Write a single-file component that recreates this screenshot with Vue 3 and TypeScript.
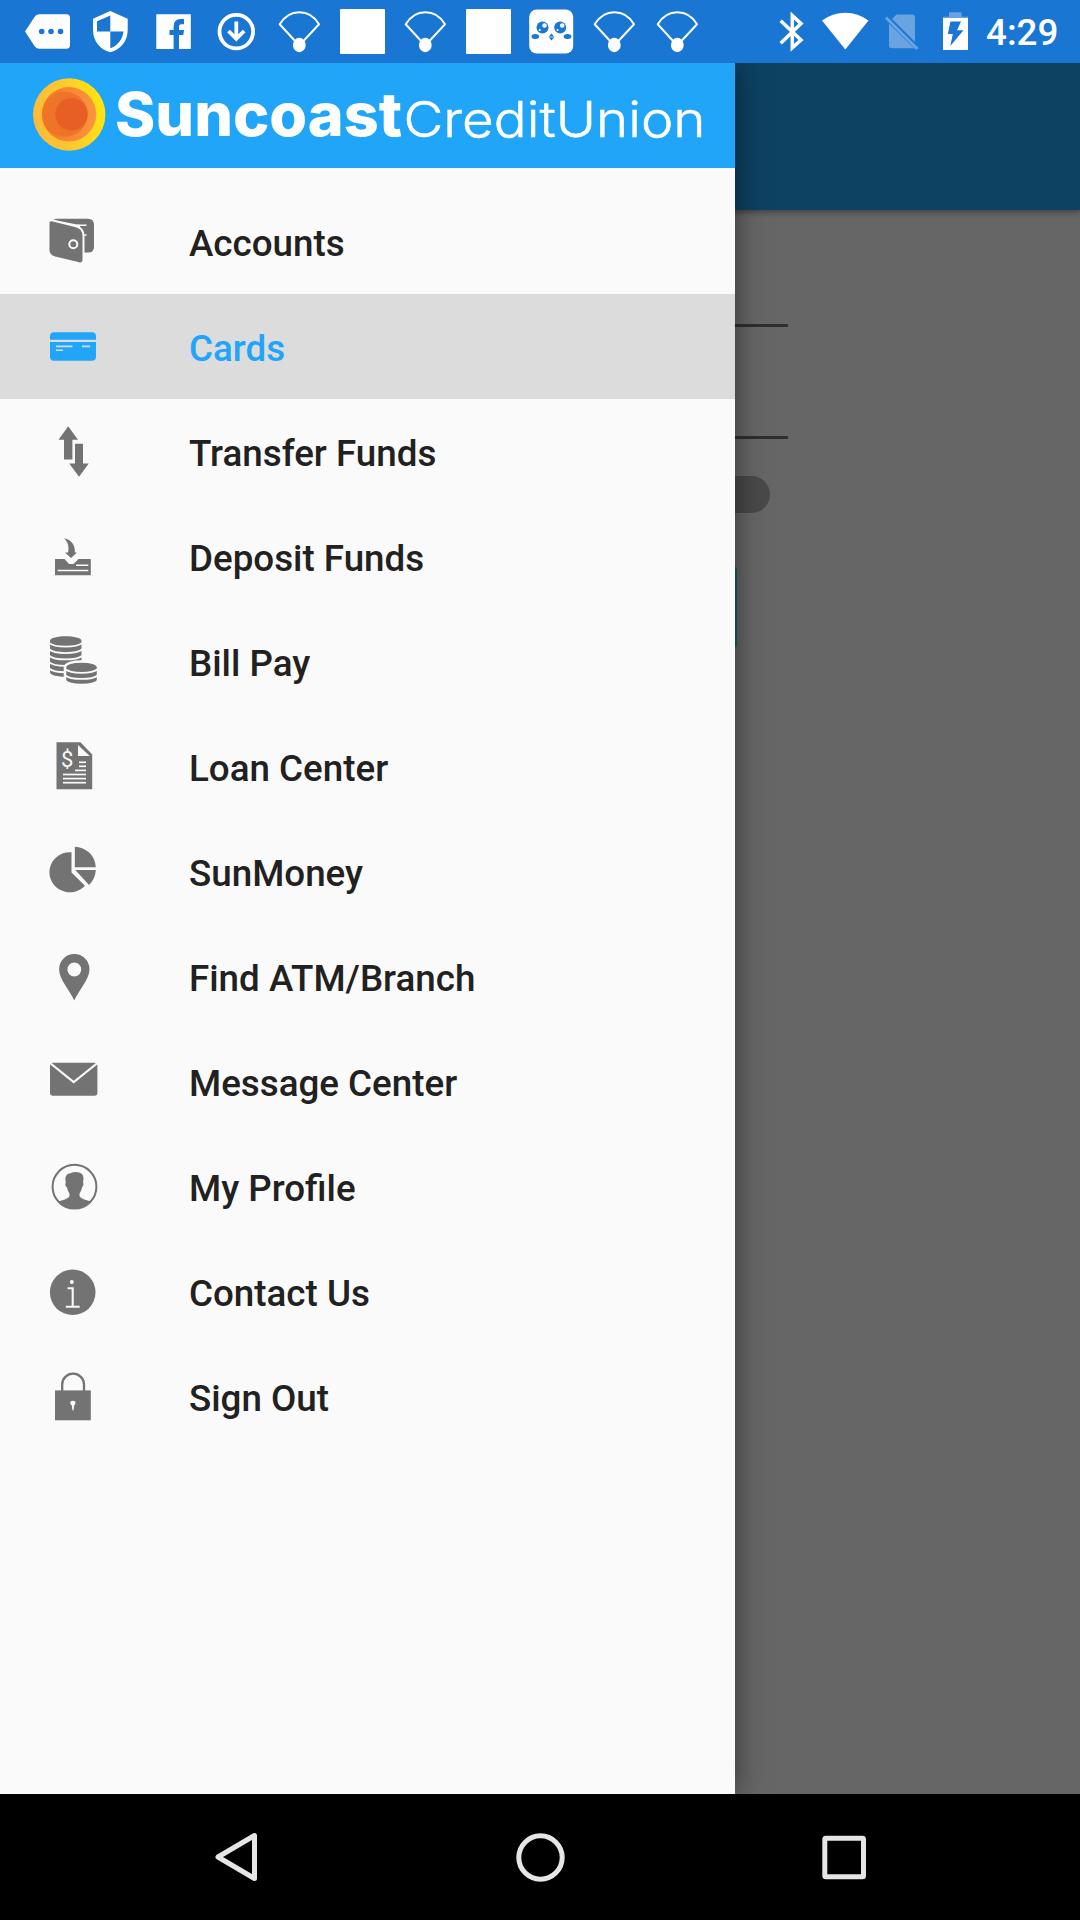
<script setup lang="ts">
import { ref } from 'vue'

interface MenuItem {
  id: string
  label: string
}

const items: MenuItem[] = [
  { id: 'accounts', label: 'Accounts' },
  { id: 'cards', label: 'Cards' },
  { id: 'transfer', label: 'Transfer Funds' },
  { id: 'deposit', label: 'Deposit Funds' },
  { id: 'bill', label: 'Bill Pay' },
  { id: 'loan', label: 'Loan Center' },
  { id: 'sunmoney', label: 'SunMoney' },
  { id: 'atm', label: 'Find ATM/Branch' },
  { id: 'message', label: 'Message Center' },
  { id: 'profile', label: 'My Profile' },
  { id: 'contact', label: 'Contact Us' },
  { id: 'signout', label: 'Sign Out' },
]

const active = ref('cards')

const notifications: string[] = [
  'tag', 'shield', 'facebook', 'download', 'chute', 'square',
  'chute', 'square', 'bird', 'chute', 'chute',
]

const leftCoinGaps = [33.9, 40.3, 46.7, 53.1, 59.5]
const loanLines: [number, number][] = [
  [79, 48.3], [79, 52.3], [75, 56.4], [63, 60.5], [63, 64.6], [63, 68.7],
]
</script>

<template>
  <div class="screen">
    <header class="status">
      <svg v-for="(n, i) in notifications" :key="i" class="note" viewBox="0 0 63 63">
        <template v-if="n === 'tag'">
          <path fill="#fff" d="M9 31.5 L18.5 17 Q20.200 14.300 23 14.300 H50.500 Q54 14.300 54 18 V45 Q54 48.700 50.500 48.700 H23 Q20.200 48.700 18.500 46 Z" />
          <circle v-for="x in [25.7, 35, 44.500]" :key="x" class="ink" :cx="x" cy="31.500" r="2.800" />
        </template>
        <template v-else-if="n === 'shield'">
          <path fill="#fff" d="M31.300 11 L48.700 18.700 V30 C48.700 41 41.500 49.500 31.300 52.200 C21 49.500 14 41 14 30 V18.700 Z" />
          <path class="ink" d="M31.300 15.500 V31.500 H18 V21.300 Z M31.300 31.500 H44.500 C43.500 39.500 38.500 45.800 31.300 48.300 Z" />
        </template>
        <template v-else-if="n === 'facebook'">
          <path fill="#fff" d="M14.300 14.300 H48.800 V49 H14.300 Z" />
          <path class="ink" d="M31.600 49 V35 H27.500 V30 H31.600 V26.500 Q31.600 19 38.500 19 H42 V24.300 H39.500 Q37 24.300 37 26.800 V30 H42 L41.300 35 H37 V49 Z" />
        </template>
        <template v-else-if="n === 'download'">
          <circle cx="31.300" cy="31.600" r="16.800" fill="none" stroke="#fff" stroke-width="3.800" />
          <path d="M31.300 21.500 V38.500 M23.500 31 L31.300 38.800 L39.100 31" fill="none" stroke="#fff" stroke-width="3.800" />
        </template>
        <template v-else-if="n === 'chute'">
          <path d="M28 42 L11.700 24.300 Q19 12.300 31.300 12.300 Q44 12.300 51 24.300 L34.500 42" fill="none" stroke="#fff" stroke-width="2" stroke-linejoin="round" />
          <ellipse cx="31.300" cy="45" rx="6.400" ry="7.200" fill="#fff" />
        </template>
        <rect v-else-if="n === 'square'" x="9" y="9" width="45" height="45" rx="1" fill="#fff" />
        <template v-else>
          <rect x="9.200" y="9.500" width="44" height="44" rx="7.500" fill="#fff" />
          <circle class="ink" cx="22.500" cy="27.500" r="6" />
          <circle class="ink" cx="40.200" cy="27.500" r="6" />
          <circle cx="24.500" cy="25.500" r="2.300" fill="#fff" />
          <circle cx="42.200" cy="25.500" r="2.300" fill="#fff" />
          <circle cx="19.800" cy="30" r="1.100" fill="#fff" />
          <circle cx="37.500" cy="30" r="1.100" fill="#fff" />
          <ellipse class="ink" cx="15.300" cy="36.500" rx="3.800" ry="2.500" />
          <ellipse class="ink" cx="47.500" cy="36.500" rx="3.800" ry="2.500" />
          <path class="ink" d="M31.500 33.500 L34.500 37 L31.500 40.500 L28.500 37 Z" />
          <path d="M28.500 37 H34.500" stroke="#fff" stroke-width=".7" />
        </template>
      </svg>
      <svg class="bt" width="38" height="63" viewBox="774 0 38 63">
        <path d="M780.700 20.800 L801 40 L792.300 47.800 V15.500 L801 23.600 L780.700 43.300" fill="none" stroke="#fff" stroke-width="3.500" />
      </svg>
      <svg width="66" height="63" viewBox="812 0 66 63">
        <path fill="#fff" d="M822 20.500 Q832.500 12.700 845.300 12.700 Q858 12.700 868.500 20.500 L845.300 49.500 Z" />
      </svg>
      <svg width="52" height="63" viewBox="878 0 52 63">
        <path fill="#69a4e0" d="M889 23.500 L914.800 48.800 Q913.500 48.200 912 48.200 H892 Q889 48.200 889 45 Z M896.500 14.500 H911.800 Q915 14.500 915 17.700 V43 L891.500 19.600 Z" />
        <path d="M886 17.500 L917.500 49" stroke="#69a4e0" stroke-width="3" />
        <path d="M888.500 16.600 L917 45" stroke="#1976d2" stroke-width="1.600" />
      </svg>
      <svg width="54" height="63" viewBox="930 0 54 63">
        <rect x="949" y="12.300" width="12.500" height="5.500" fill="#69a4e0" />
        <rect x="943" y="16.700" width="25" height="1.400" fill="#69a4e0" />
        <rect x="943" y="18" width="25" height="32" fill="#fff" />
        <path class="ink" d="M950.500 21.500 H961 L957 30.200 H963.500 L950.300 46 L952.800 34 H947.800 Z" />
      </svg>
      <span class="clock">4:29</span>
    </header>

    <main class="stage">
      <section class="page">
        <div class="appbar"></div>
        <div class="form">
          <div class="line first"></div>
          <div class="line second"></div>
          <div class="pill"></div>
          <div class="button"></div>
        </div>
      </section>

      <aside class="drawer">
        <div class="brand">
          <svg width="735" height="105" viewBox="0 63 735 105">
            <defs>
              <linearGradient id="rim" x1="0" x2="1" y1=".6" y2=".4">
                <stop offset="0" stop-color="#fdb93a" />
                <stop offset=".5" stop-color="#fccb2c" />
                <stop offset="1" stop-color="#ffe60c" />
              </linearGradient>
              <linearGradient id="glow" x1="0" x2="1">
                <stop offset="0" stop-color="#f07a28" />
                <stop offset="1" stop-color="#fb9440" />
              </linearGradient>
            </defs>
            <circle cx="69.200" cy="114.500" r="36.200" fill="url(#rim)" />
            <circle cx="69" cy="114.300" r="27.200" fill="url(#glow)" />
            <circle cx="65" cy="114.300" r="22.500" fill="#ef7428" />
            <circle cx="71.500" cy="114.300" r="16.200" fill="#e75f25" />
            <text x="115" y="136.300" class="bold" textLength="287" lengthAdjust="spacingAndGlyphs">Suncoast</text>
            <text x="403.500" y="136.500" class="light" textLength="302" lengthAdjust="spacingAndGlyphs">CreditUnion</text>
          </svg>
        </div>

        <nav class="menu">
          <a v-for="item in items" :key="item.id" class="row" :class="{ active: item.id === active }" @click="active = item.id">
            <svg class="icon" viewBox="36 0 72 105" fill="currentColor">
              <template v-if="item.id === 'accounts'">
                <path d="M53 31 Q55 29.700 58 29.700 H88 Q94 29.700 94 36 V58 Q94 63.500 88 63.500 H80 V36 Z" />
                <path d="M77 36.300 H86.500 M82 46 H86.500" class="gap" stroke-width="1.600" />
                <path class="cut" stroke-width="2" d="M48.500 34.500 Q48.500 30.500 53 31.500 L76 37.300 Q83.500 39.300 83.500 47 V70.500 Q83.500 75 79 74.300 L55 68.500 Q48.500 66.600 48.500 61 Z" />
                <circle cx="73.300" cy="55.300" r="4" class="gap" stroke-width="2" />
              </template>
              <template v-else-if="item.id === 'cards'">
                <rect x="50" y="38.300" width="46" height="28.500" rx="4" />
                <path class="gap" stroke-width="2.200" d="M50 46.800 H96" />
                <path class="gap" stroke-width="1.600" d="M56 52.400 H72.500 M82 52.400 H90 M56 56.200 H63" />
              </template>
              <template v-else-if="item.id === 'transfer'">
                <path d="M68.200 27.200 L78 40.700 H72.400 V60.400 H64 V40.700 H58.500 Z" />
                <path d="M75 44.800 H83 V64.400 H88.800 L79 77.700 L69.200 64.400 H75 Z" />
              </template>
              <template v-else-if="item.id === 'deposit'">
                <path d="M64 34.300 C71.500 35.500 75.500 41.500 74.800 48.600 H77 L71 54 L65 48.600 H68 C69.500 42.500 67.500 37.500 64 34.300 Z" />
                <path d="M55 55 H64.500 L69 60 H73.500 L78.500 55 H90.800 V71.200 H55 Z" />
                <path class="gap" stroke-width="1.600" d="M76 61.200 H88.300 M57.700 66.500 H88.300" />
              </template>
              <template v-else-if="item.id === 'bill'">
                <path d="M50 31.800 C50 25.800 81.500 25.800 81.500 31.800 V63.300 C81.500 69.300 50 69.300 50 63.300 Z" />
                <path v-for="y in leftCoinGaps" :key="y" class="gap" stroke-width="1.800" :d="`M49 ${y} C55 ${y + 5} 76 ${y + 5} 82.500 ${y}`" />
                <path class="cut" stroke-width="2.500" d="M65 58.200 C65 50.600 98 50.600 98 58.200 V70.700 C98 77.700 65 77.700 65 70.700 Z" />
                <path class="gap" stroke-width="1.800" d="M65 60 C71 65.200 92 65.200 98 60 M65 66.200 C71 71.200 92 71.200 98 66.200" />
              </template>
              <template v-else-if="item.id === 'loan'">
                <path d="M56.500 28.200 H80.500 L92.200 40.500 V75.300 H56.500 Z" />
                <path fill="#fafafa" d="M78 31 L89.800 42 H78 Z" />
                <text x="67.300" y="52.500" class="dollar">$</text>
                <path v-for="l in loanLines" :key="l[1]" class="gap" stroke-width="1.700" :d="`M${l[0]} ${l[1]} H86`" />
              </template>
              <template v-else-if="item.id === 'sunmoney'">
                <path d="M70.800 33.300 V53.500 L84.200 66.700 A20.400 20 0 1 1 70.800 33.300 Z" transform="translate(.7 0)" />
                <path d="M74.800 27.800 A21.200 21 0 0 1 95.800 48.300 H74.800 Z" />
                <path d="M75.300 51 H95.800 Q95.500 59.500 89 66 Z" />
              </template>
              <path v-else-if="item.id === 'atm'" fill-rule="evenodd" d="M74.300 76.500 C70.500 67.500 59.100 55.500 59.100 45.300 A15.200 15.200 0 0 1 89.500 45.300 C89.500 55.500 78 67.500 74.300 76.500 Z M74.300 38.600 A6.900 6.900 0 1 0 74.300 52.400 A6.900 6.900 0 1 0 74.300 38.600 Z" />
              <template v-else-if="item.id === 'message'">
                <rect x="50" y="33.700" width="47.400" height="33" rx="3" />
                <path class="gap" stroke-width="2.200" d="M50 34 L73.700 53.200 L97.500 34" />
              </template>
              <template v-else-if="item.id === 'profile'">
                <circle cx="74.500" cy="52.700" r="21.900" fill="none" stroke="currentColor" stroke-width="2" />
                <path d="M65.800 48.500 C64.500 42.500 66.500 39.700 70.500 39.200 C75 37.200 80.500 37.900 82.500 40.800 C84 43.500 83.500 46 83 48.500 C84 50 83 52.500 82 53.500 C81.500 56.500 80.500 58 79.500 59.500 V62 C81.500 65.500 86.500 65.800 91 67.500 A22.500 22.500 0 0 1 58 67.500 C62.500 65.800 68 65.500 69.500 62 V59.500 C68 57.500 67.500 55.500 67 53.500 C65.500 52.500 64.800 50 65.800 48.500 Z" />
              </template>
              <template v-else-if="item.id === 'contact'">
                <circle cx="72.700" cy="53.300" r="22.800" />
                <circle cx="71.800" cy="42.900" r="2" fill="#fafafa" />
                <path class="gap" stroke-width="2.100" d="M67.500 49.300 H72.700 V67.800 M65.800 67.800 H79.700" />
              </template>
              <template v-else>
                <rect x="55" y="46.400" width="35.800" height="29.900" />
                <path d="M62.200 47 V40.500 A10.900 10.800 0 0 1 84 40.500 V47" fill="none" stroke="currentColor" stroke-width="2.300" />
                <path fill="#fafafa" d="M70.500 57.500 Q72.900 55.800 75.300 57.500 V60 L74.200 61.500 L73.500 66.500 H72.500 L71.800 61.500 L70.500 60 Z" />
              </template>
            </svg>
            <span class="label">{{ item.label }}</span>
          </a>
        </nav>
      </aside>
    </main>

    <footer class="navbar">
      <svg width="60" height="60" viewBox="0 0 60 60"><path d="M49.500 8.500 V51.500 L13 30 Z" /></svg>
      <svg width="60" height="60" viewBox="0 0 60 60"><circle cx="30.500" cy="30.500" r="21.700" /></svg>
      <svg width="60" height="60" viewBox="0 0 60 60"><rect x="10.800" y="11.300" width="38.700" height="38.400" rx="1" /></svg>
    </footer>
  </div>
</template>

<style>
body {
  margin: 0;
  background: #000;
}
</style>

<style scoped>
.screen {
  width: 1080px;
  height: 1920px;
  display: flex;
  flex-direction: column;
  overflow: hidden;
  font-family: Roboto, "Liberation Sans", sans-serif;
}
svg {
  display: block;
  flex: none;
}
.status {
  height: 63px;
  flex: none;
  display: flex;
  align-items: center;
  padding-left: 16px;
  background: #1976d2;
}
.note {
  width: 63px;
  height: 63px;
}
.ink {
  fill: #1976d2;
}
.bt {
  margin-left: 65px;
}
.clock {
  padding: 3px 0 0 2px;
  color: #fff;
  font-size: 36.75px;
  font-weight: 500;
  line-height: 60px;
}
.stage {
  position: relative;
  flex: 1;
  overflow: hidden;
}
.page {
  height: 100%;
  background: #666;
}
.appbar {
  height: 147px;
  background: #0d4262;
  box-shadow: 0 2px 6px rgba(0, 0, 0, 0.4);
}
.form {
  padding-top: 114px;
}
.line {
  width: 788px;
  height: 3px;
  background: #2f2f2f;
}
.second {
  margin-top: 109px;
}
.pill {
  width: 770px;
  height: 37px;
  margin-top: 37px;
  border-radius: 19px;
  background: #494949;
}
.button {
  width: 737px;
  height: 80px;
  margin-top: 54px;
  border-radius: 2px;
  background: #1d5a6c;
}
.drawer {
  position: absolute;
  top: 0;
  left: 0;
  bottom: 0;
  width: 735px;
  background: #fafafa;
  box-shadow: 0 0 28px rgba(0, 0, 0, 0.5);
}
.brand {
  height: 105px;
  background: #20a5f9;
}
.bold,
.light {
  fill: #fff;
  font-family: Inter, sans-serif;
}
.bold {
  font-size: 60px;
  font-weight: 800;
}
.light {
  font-size: 49px;
  font-weight: 350;
  stroke: #fff;
  stroke-width: 0.5px;
}
.menu {
  padding-top: 21px;
}
.row {
  height: 105px;
  display: flex;
  align-items: center;
  padding-left: 36px;
  gap: 81px;
  color: #212121;
  --surface: #fafafa;
}
.active {
  background: #dcdcdc;
  color: #20a5f9;
  --surface: #dcdcdc;
}
.icon {
  width: 72px;
  height: 105px;
  color: #737373;
}
.active .icon {
  color: #20a5f9;
}
.gap {
  fill: none;
  stroke: var(--surface);
}
.cut {
  stroke: var(--surface);
}
.dollar {
  fill: #fafafa;
  font-size: 22px;
  text-anchor: middle;
}
.label {
  padding-top: 4px;
  font-size: 36.75px;
  font-weight: 500;
  line-height: 44px;
  white-space: nowrap;
}
.navbar {
  height: 126px;
  flex: none;
  display: flex;
  align-items: center;
  justify-content: space-between;
  padding: 0 206px 0 205px;
  box-sizing: border-box;
  background: #000;
}
.navbar path,
.navbar circle,
.navbar rect {
  fill: none;
  stroke: #e6e6e6;
  stroke-width: 5;
  stroke-linejoin: round;
}
</style>
